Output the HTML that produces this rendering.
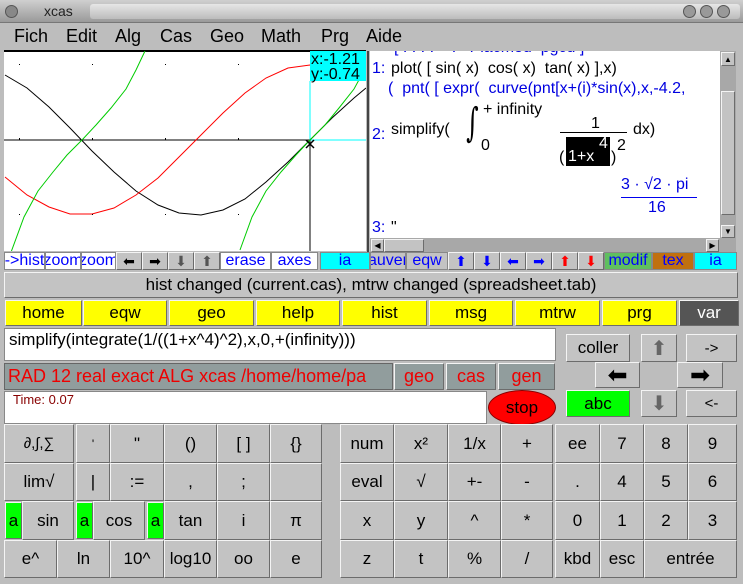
<!DOCTYPE html><html><head><meta charset="utf-8"><style>
*{margin:0;padding:0;box-sizing:border-box}
body{width:743px;height:584px;background:#bdbdbd;position:relative;overflow:hidden;font-family:"Liberation Sans",sans-serif;}
.a{position:absolute}
.b{position:absolute;display:flex;align-items:center;justify-content:center;border:1px solid;border-color:#f4f4f4 #6c6c6c #6c6c6c #f4f4f4;background:#c3c3c3;color:#000;font-size:17px;white-space:nowrap;overflow:hidden}
.t{position:absolute;display:flex;align-items:center;justify-content:center;border:1px solid #888;font-size:16px;white-space:nowrap;overflow:hidden;color:#00f;background:#fff}
.m{position:absolute;top:26px;font-size:18px}
.r{position:absolute;font-size:16px;white-space:nowrap}
.bl{color:#0000e0}
</style></head><body>
<!-- title -->
<div class="a" style="left:0;top:0;width:743px;height:23px;background:linear-gradient(#cfcfcf,#9a9a9a);border-bottom:1px solid #777"></div>
<div class="a" style="left:90px;top:4px;width:650px;height:15px;background:linear-gradient(#e6e6e6,#bcbcbc);border-radius:3px"></div>
<div class="a" style="left:5px;top:5px;width:13px;height:13px;border-radius:50%;background:#888;border:1px solid #555"></div>
<div class="r" style="left:44px;top:3px;font-size:14px;color:#222">xcas</div>
<div class="a" style="left:683px;top:5px;width:13px;height:13px;border-radius:50%;background:#999;border:1px solid #555"></div>
<div class="a" style="left:700px;top:5px;width:13px;height:13px;border-radius:50%;background:#999;border:1px solid #555"></div>
<div class="a" style="left:717px;top:5px;width:13px;height:13px;border-radius:50%;background:#999;border:1px solid #555"></div>
<!-- menu -->
<div class="m" style="left:14px">Fich</div><div class="m" style="left:66px">Edit</div><div class="m" style="left:115px">Alg</div><div class="m" style="left:160px">Cas</div><div class="m" style="left:210px">Geo</div><div class="m" style="left:261px">Math</div><div class="m" style="left:321px">Prg</div><div class="m" style="left:366px">Aide</div>
<!-- graph -->
<svg class="a" style="left:0;top:0" width="370" height="252">
<rect x="4" y="51" width="362" height="200" fill="#fff"/>
<line x1="4" y1="51" x2="366" y2="51" stroke="#000" stroke-width="2"/>
<clipPath id="c"><rect x="4" y="51" width="362" height="200"/></clipPath>
<g clip-path="url(#c)" fill="none">
<line x1="4" y1="140" x2="310" y2="140" stroke="#000"/>
<line x1="310" y1="140" x2="310" y2="251" stroke="#000"/>
<line x1="310" y1="81" x2="310" y2="140" stroke="#0ff"/>
<line x1="310" y1="140" x2="366" y2="140" stroke="#0ff"/>
<polyline stroke="#000" points="5,75 27,88 49,107 70,128 92,151 114,172 136,191 158,205 179,213 201,215 223,210 245,199 266,182 288,162 310,140 332,118 354,98 366,88"/>
<polyline stroke="#f00" points="5,177 27,195 49,207 70,214 92,214 114,208 136,195 158,178 179,157 201,135 223,113 245,93 266,78 288,68 310,65 332,66 354,72 366,76"/>
<polyline stroke="#0c0" points="10,255 24,217 38,191 53,172 67,155 82,140 96,125 111,108 126,89 136,70 145,51"/>
<polyline stroke="#0c0" points="240,250 252,217 266,191 281,172 296,155 310,140 325,125 339,108 354,89 366,67"/>
<g fill="#000"><rect x="19" y="64" width="1" height="1"/><rect x="92" y="64" width="1" height="1"/><rect x="165" y="64" width="1" height="1"/><rect x="238" y="64" width="1" height="1"/><rect x="19" y="214" width="1" height="1"/><rect x="92" y="214" width="1" height="1"/><rect x="165" y="214" width="1" height="1"/><rect x="238" y="214" width="1" height="1"/><rect x="19" y="138" width="1" height="2"/><rect x="92" y="138" width="1" height="2"/><rect x="165" y="138" width="1" height="2"/><rect x="238" y="138" width="1" height="2"/></g>
<path d="M306 140 L314 148 M314 140 L306 148" stroke="#000" stroke-width="1.5"/>
<rect x="310" y="51" width="56" height="30" fill="#0ff"/>
<text x="311" y="64" font-family="Liberation Sans" font-size="16" fill="#000">x:-1.21</text>
<text x="311" y="79" font-family="Liberation Sans" font-size="16" fill="#000">y:-0.74</text>
</g>
<line x1="368" y1="51" x2="368" y2="252" stroke="#444" stroke-width="2"/>
</svg>
<!-- history -->
<div class="a" style="left:370px;top:51px;width:350px;height:187px;background:#fff;overflow:hidden">
<div class="r bl" style="left:24px;top:-12px">[ . . . . &nbsp;&nbsp; . &nbsp; Placmed &nbsp;pgcd ]</div>
<div class="r bl" style="left:2px;top:9px">1:</div><div class="r" style="left:21px;top:9px">plot( [ sin( x) &nbsp;cos( x) &nbsp;tan( x) ],x)</div>
<div class="r bl" style="left:18px;top:29px">( &nbsp;pnt( [ expr( &nbsp;curve(pnt[x+(i)*sin(x),x,-4.2,</div>
<div class="r" style="left:113px;top:50px">+ infinity</div>
<div class="r bl" style="left:2px;top:75px">2:</div><div class="r" style="left:21px;top:70px">simplify(</div>
<div class="r" style="left:92px;top:49px;font-size:40px;line-height:46px;transform:scaleX(.6);font-family:'DejaVu Serif',serif">∫</div>
<div class="r" style="left:111px;top:86px">0</div>
<div class="r" style="left:221px;top:64px">1</div>
<div class="a" style="left:190px;top:81px;width:67px;height:1px;background:#000"></div>
<div class="r" style="left:263px;top:70px">dx)</div>
<div class="r" style="left:189px;top:98px">(</div>
<div class="a" style="left:196px;top:86px;width:44px;height:29px;background:#000"></div>
<div class="r" style="left:198px;top:97px;color:#fff">1+x</div><div class="r" style="left:229px;top:84px;color:#fff">4</div>
<div class="r" style="left:241px;top:98px">)</div><div class="r" style="left:247px;top:86px">2</div>
<div class="r bl" style="left:251px;top:125px">3 · √2 · pi</div>
<div class="a" style="left:251px;top:146px;width:76px;height:1px;background:#00e"></div>
<div class="r bl" style="left:278px;top:148px">16</div>
<div class="r bl" style="left:2px;top:168px">3:</div><div class="r" style="left:21px;top:168px">"</div>
</div>
<div class="a" style="left:720px;top:51px;width:16px;height:187px;background:#a8a8a8"></div>
<div class="b" style="left:721px;top:52px;width:14px;height:14px;font-size:8px">▲</div>
<div class="b" style="left:721px;top:91px;width:14px;height:124px"></div>
<div class="b" style="left:721px;top:225px;width:14px;height:13px;font-size:8px">▼</div>
<div class="a" style="left:370px;top:238px;width:366px;height:14px;background:#a8a8a8"></div>
<div class="b" style="left:371px;top:239px;width:13px;height:13px;font-size:8px">◀</div>
<div class="b" style="left:384px;top:239px;width:40px;height:13px"></div>
<div class="b" style="left:706px;top:239px;width:13px;height:13px;font-size:8px">▶</div>
<!-- toolbar -->
<div class="t" style="left:4px;top:252px;width:41px;height:18px">-&gt;hist</div>
<div class="t" style="left:45px;top:252px;width:36px;height:18px">zoom</div>
<div class="t" style="left:81px;top:252px;width:35px;height:18px">zoom</div>
<div class="b" style="left:116px;top:252px;width:26px;height:18px;font-size:14px">⬅</div>
<div class="b" style="left:142px;top:252px;width:26px;height:18px;font-size:14px">➡</div>
<div class="b" style="left:168px;top:252px;width:26px;height:18px;font-size:14px;color:#555">⬇</div>
<div class="b" style="left:194px;top:252px;width:26px;height:18px;font-size:14px;color:#555">⬆</div>
<div class="t" style="left:220px;top:252px;width:51px;height:18px">erase</div>
<div class="t" style="left:271px;top:252px;width:47px;height:18px">axes</div>
<div class="t" style="left:320px;top:252px;width:50px;height:18px;background:#0ff">ia</div>
<div class="t" style="left:370px;top:252px;width:36px;height:18px;background:#c3c3c3">auver</div>
<div class="t" style="left:406px;top:252px;width:42px;height:18px;background:#c3c3c3">eqw</div>
<div class="b" style="left:448px;top:252px;width:26px;height:18px;font-size:14px;color:#00f">⬆</div>
<div class="b" style="left:474px;top:252px;width:26px;height:18px;font-size:14px;color:#00f">⬇</div>
<div class="b" style="left:500px;top:252px;width:26px;height:18px;font-size:14px;color:#00f">⬅</div>
<div class="b" style="left:526px;top:252px;width:26px;height:18px;font-size:14px;color:#00f">➡</div>
<div class="b" style="left:552px;top:252px;width:26px;height:18px;font-size:14px;color:#f00">⬆</div>
<div class="b" style="left:578px;top:252px;width:26px;height:18px;font-size:14px;color:#f00">⬇</div>
<div class="t" style="left:604px;top:252px;width:48px;height:18px;background:#5fbf5f">modif</div>
<div class="t" style="left:652px;top:252px;width:42px;height:18px;background:#c07010">tex</div>
<div class="t" style="left:694px;top:252px;width:43px;height:18px;background:#0ff">ia</div>
<div class="b" style="left:4px;top:272px;width:734px;height:26px">hist changed (current.cas), mtrw changed (spreadsheet.tab)</div>
<!-- yellow -->
<div class="b" style="left:5px;top:300px;width:77px;height:26px;background:#ff0">home</div>
<div class="b" style="left:83px;top:300px;width:84px;height:26px;background:#ff0">eqw</div>
<div class="b" style="left:169px;top:300px;width:85px;height:26px;background:#ff0">geo</div>
<div class="b" style="left:256px;top:300px;width:84px;height:26px;background:#ff0">help</div>
<div class="b" style="left:342px;top:300px;width:85px;height:26px;background:#ff0">hist</div>
<div class="b" style="left:429px;top:300px;width:84px;height:26px;background:#ff0">msg</div>
<div class="b" style="left:515px;top:300px;width:85px;height:26px;background:#ff0">mtrw</div>
<div class="b" style="left:602px;top:300px;width:75px;height:26px;background:#ff0">prg</div>
<div class="b" style="left:679px;top:300px;width:60px;height:26px;background:#555;color:#fff">var</div>
<!-- input -->
<div class="a" style="left:4px;top:328px;width:552px;height:33px;background:#fff;border:1px solid #888;font-size:17px;padding:1px 0 0 4px">simplify(integrate(1/((1+x^4)^2),x,0,+(infinity)))</div>
<div class="a" style="left:4px;top:363px;width:389px;height:27px;background:#919d9d;color:#e00;font-size:18px;padding:2px 0 0 3px;white-space:nowrap;overflow:hidden;border:1px solid #666">RAD 12 real exact ALG xcas /home/home/pa</div>
<div class="b" style="left:394px;top:363px;width:50px;height:27px;background:#919d9d;color:#e00;font-size:18px">geo</div>
<div class="b" style="left:446px;top:363px;width:50px;height:27px;background:#919d9d;color:#e00;font-size:18px">cas</div>
<div class="b" style="left:498px;top:363px;width:57px;height:27px;background:#919d9d;color:#e00;font-size:18px">gen</div>
<div class="a" style="left:4px;top:391px;width:483px;height:33px;background:#fff;border:1px solid #888;color:#800;font-size:13px;padding:0 0 0 8px">Time: 0.07</div>
<div class="a" style="left:488px;top:390px;width:68px;height:35px;border-radius:50%;background:#f00;border:1px solid #800;display:flex;align-items:center;justify-content:center;font-size:17px">stop</div>
<div class="b" style="left:566px;top:334px;width:64px;height:28px">coller</div>
<div class="b" style="left:641px;top:334px;width:36px;height:28px;font-size:20px;color:#666">⬆</div>
<div class="b" style="left:686px;top:334px;width:51px;height:28px;font-size:15px">-&gt;</div>
<div class="b" style="left:595px;top:362px;width:45px;height:26px;font-size:24px">⬅</div>
<div class="b" style="left:677px;top:362px;width:46px;height:26px;font-size:24px">➡</div>
<div class="b" style="left:566px;top:390px;width:64px;height:27px;background:#0f0">abc</div>
<div class="b" style="left:641px;top:390px;width:36px;height:27px;font-size:20px;color:#666">⬇</div>
<div class="b" style="left:686px;top:390px;width:51px;height:27px;font-size:15px">&lt;-</div>
<!-- keypad left -->
<div class="b" style="left:4px;top:424px;width:70px;height:39px;font-size:15px">∂,∫,∑</div>
<div class="b" style="left:76px;top:424px;width:34px;height:39px;font-size:12px">'</div>
<div class="b" style="left:110px;top:424px;width:54px;height:39px">"</div>
<div class="b" style="left:164px;top:424px;width:53px;height:39px">()</div>
<div class="b" style="left:217px;top:424px;width:53px;height:39px">[ ]</div>
<div class="b" style="left:270px;top:424px;width:52px;height:39px">{}</div>
<div class="b" style="left:4px;top:463px;width:70px;height:38px">lim√</div>
<div class="b" style="left:76px;top:463px;width:34px;height:38px">|</div>
<div class="b" style="left:110px;top:463px;width:54px;height:38px">:=</div>
<div class="b" style="left:164px;top:463px;width:53px;height:38px">,</div>
<div class="b" style="left:217px;top:463px;width:53px;height:38px">;</div>
<div class="b" style="left:270px;top:463px;width:52px;height:38px"></div>
<div class="b" style="left:5px;top:502px;width:17px;height:37px;background:#0f0">a</div>
<div class="b" style="left:22px;top:501px;width:52px;height:39px">sin</div>
<div class="b" style="left:76px;top:502px;width:17px;height:37px;background:#0f0">a</div>
<div class="b" style="left:93px;top:501px;width:52px;height:39px">cos</div>
<div class="b" style="left:147px;top:502px;width:17px;height:37px;background:#0f0">a</div>
<div class="b" style="left:164px;top:501px;width:53px;height:39px">tan</div>
<div class="b" style="left:217px;top:501px;width:53px;height:39px">i</div>
<div class="b" style="left:270px;top:501px;width:52px;height:39px">π</div>
<div class="b" style="left:4px;top:540px;width:53px;height:38px">e^</div>
<div class="b" style="left:57px;top:540px;width:53px;height:38px">ln</div>
<div class="b" style="left:110px;top:540px;width:54px;height:38px">10^</div>
<div class="b" style="left:164px;top:540px;width:53px;height:38px">log10</div>
<div class="b" style="left:217px;top:540px;width:53px;height:38px">oo</div>
<div class="b" style="left:270px;top:540px;width:52px;height:38px">e</div>
<!-- middle -->
<div class="b" style="left:340px;top:424px;width:54px;height:39px">num</div>
<div class="b" style="left:394px;top:424px;width:54px;height:39px">x²</div>
<div class="b" style="left:448px;top:424px;width:53px;height:39px">1/x</div>
<div class="b" style="left:501px;top:424px;width:52px;height:39px">+</div>
<div class="b" style="left:340px;top:463px;width:54px;height:38px">eval</div>
<div class="b" style="left:394px;top:463px;width:54px;height:38px">√</div>
<div class="b" style="left:448px;top:463px;width:53px;height:38px">+-</div>
<div class="b" style="left:501px;top:463px;width:52px;height:38px">-</div>
<div class="b" style="left:340px;top:501px;width:54px;height:39px">x</div>
<div class="b" style="left:394px;top:501px;width:54px;height:39px">y</div>
<div class="b" style="left:448px;top:501px;width:53px;height:39px">^</div>
<div class="b" style="left:501px;top:501px;width:52px;height:39px">*</div>
<div class="b" style="left:340px;top:540px;width:54px;height:38px">z</div>
<div class="b" style="left:394px;top:540px;width:54px;height:38px">t</div>
<div class="b" style="left:448px;top:540px;width:53px;height:38px">%</div>
<div class="b" style="left:501px;top:540px;width:52px;height:38px">/</div>
<!-- right -->
<div class="b" style="left:555px;top:424px;width:45px;height:39px">ee</div>
<div class="b" style="left:600px;top:424px;width:44px;height:39px">7</div>
<div class="b" style="left:644px;top:424px;width:44px;height:39px">8</div>
<div class="b" style="left:688px;top:424px;width:49px;height:39px">9</div>
<div class="b" style="left:555px;top:463px;width:45px;height:38px">.</div>
<div class="b" style="left:600px;top:463px;width:44px;height:38px">4</div>
<div class="b" style="left:644px;top:463px;width:44px;height:38px">5</div>
<div class="b" style="left:688px;top:463px;width:49px;height:38px">6</div>
<div class="b" style="left:555px;top:501px;width:45px;height:39px">0</div>
<div class="b" style="left:600px;top:501px;width:44px;height:39px">1</div>
<div class="b" style="left:644px;top:501px;width:44px;height:39px">2</div>
<div class="b" style="left:688px;top:501px;width:49px;height:39px">3</div>
<div class="b" style="left:555px;top:540px;width:45px;height:38px">kbd</div>
<div class="b" style="left:600px;top:540px;width:44px;height:38px">esc</div>
<div class="b" style="left:644px;top:540px;width:93px;height:38px">entrée</div>
</body></html>
